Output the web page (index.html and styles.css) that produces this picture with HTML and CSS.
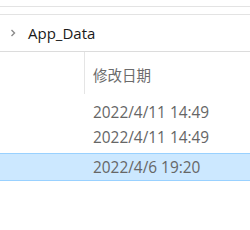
FILE: index.html
```html
<!DOCTYPE html>
<html>
<head>
<meta charset="utf-8">
<link rel="stylesheet" href="styles.css">
</head>
<body>
<div class="top"></div>
<div class="tree-row">
  <svg class="chev" width="6" height="8" viewBox="0 0 6 8"><path d="M1.5 1 L4.5 4 L1.5 7" fill="none" stroke="#8a8a8a" stroke-width="1.4"/></svg>
  <span class="name">App_Data</span>
</div>
<div class="list">
  <div class="header">
    <div class="sep"></div>
    <span class="htext">修改日期</span>
  </div>
  <div class="row"><span class="date">2022/4/11 14:49</span></div>
  <div class="row"><span class="date">2022/4/11 14:49</span></div>
  <div class="row sel"><span class="date">2022/4/6 19:20</span></div>
</div>
</body>
</html>
```
FILE: styles.css
```css
html, body { margin: 0; padding: 0; background: #fff; }
body { width: 250px; height: 230px; overflow: hidden; font-family: "Open Sans", "Noto Sans CJK SC", sans-serif; }
.top { height: 6px; border-bottom: 1px solid #e3e3e3; }
.tree-row { margin-top: 7px; border-top: 1px solid #e3e3e3; border-bottom: 1px solid #dcdcdc; height: 36px; display: flex; align-items: center; }
.chev { margin-left: 10px; }
.name { margin-left: 12px; font-size: 15px; color: #1a1a1a; }
.header { height: 48px; box-sizing: border-box; padding-bottom: 4px; display: flex; align-items: center; }
.sep { width: 1px; height: 42px; background: #e5e5e5; margin-left: 84px; align-self: flex-start; }
.htext { margin-left: 8px; font-size: 14.5px; color: #6b6b6b; font-family: "Noto Sans CJK SC", sans-serif; }
.row { height: 25px; display: flex; align-items: center; }
.date { margin-left: 93px; font-size: 15.4px; color: #666; }
.sel { background: #cce8ff; border-top: 1px solid #99d1ff; border-bottom: 1px solid #99d1ff; height: 26px; margin-top: 3px; }
```
